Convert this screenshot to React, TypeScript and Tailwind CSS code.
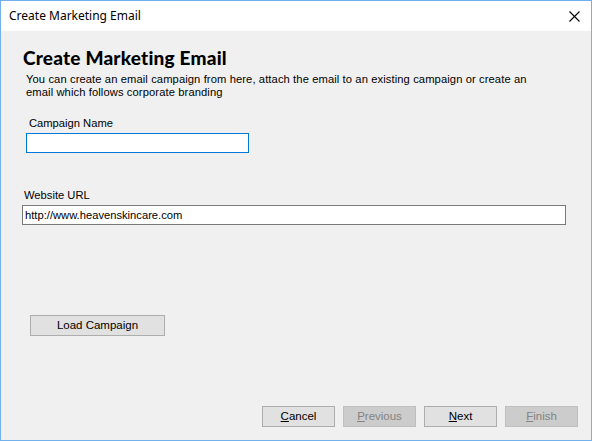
const ui = { fontFamily: '"Liberation Sans", Arial, sans-serif' };

function WizButton({ label, mnemonic, disabled }: { label: string; mnemonic: string; disabled?: boolean }) {
  const rest = label.slice(1);
  return (
    <button
      className={`w-[73px] h-[21px] border text-[11.5px] leading-none ${
        disabled ? "bg-[#cccccc] border-[#bfbfbf] text-[#838383]" : "bg-[#e1e1e1] border-[#adadad] text-black"
      }`}
      style={ui}
    >
      <span className="underline underline-offset-1">{mnemonic}</span>
      {rest}
    </button>
  );
}

export default function App() {
  return (
    <div className="w-[592px] h-[441px] border border-[#73b1ec] flex flex-col bg-[#f0f0f0] overflow-hidden">
      {/* title bar */}
      <div className="h-[30px] bg-white flex items-center justify-between pl-[8px] pr-[10px] shrink-0">
        <span className="text-[12px] text-black" style={{ fontFamily: '"Noto Sans", "Open Sans", sans-serif' }}>
          Create Marketing Email
        </span>
        <svg width="11" height="11" viewBox="0 0 11 11" className="mr-[1px]">
          <path d="M0.5 0.5 L10.5 10.5 M10.5 0.5 L0.5 10.5" stroke="#000" strokeWidth="1.1" />
        </svg>
      </div>

      <div className="flex-1 flex flex-col">
        <h1
          className="ml-[22px] mt-[15px] text-[19px] font-black leading-[24px] text-black tracking-[0.2px]"
          style={{ fontFamily: 'Lato, "Noto Sans", sans-serif' }}
        >
          Create Marketing Email
        </h1>
        <p className="ml-[25px] mt-[3px] w-[512px] text-[11.2px] leading-[13px] text-black tracking-[0.1px]" style={ui}>
          You can create an email campaign from here, attach the email to an existing campaign or create an email
          which follows corporate branding
        </p>

        <label className="ml-[28px] mt-[17px] text-[11.2px] leading-[14px] text-black" style={ui}>
          Campaign Name
        </label>
        <div className="ml-[25px] mt-[3px] w-[223px] h-[20px] bg-white border border-[#0078d7]" />

        <label className="ml-[23px] mt-[35px] text-[11.2px] leading-[14px] text-black" style={ui}>
          Website URL
        </label>
        <div
          className="ml-[21px] mt-[3px] w-[544px] h-[20px] bg-white border border-[#7a7a7a] flex items-center pl-[2px] text-[11.2px] text-black"
          style={ui}
        >
          http://www.heavenskincare.com
        </div>

        <div className="ml-[29px] mt-[86px]">
          <button
            className="w-[135px] h-[21px] bg-[#e1e1e1] border border-[#adadad] text-[11.5px] leading-none text-black"
            style={ui}
          >
            Load Campaign
          </button>
        </div>

        <div className="mt-auto mb-[13px] flex justify-end gap-[8px] pr-[13px]">
          <WizButton label="Cancel" mnemonic="C" />
          <WizButton label="Previous" mnemonic="P" disabled />
          <WizButton label="Next" mnemonic="N" />
          <WizButton label="Finish" mnemonic="F" disabled />
        </div>
      </div>
    </div>
  );
}
